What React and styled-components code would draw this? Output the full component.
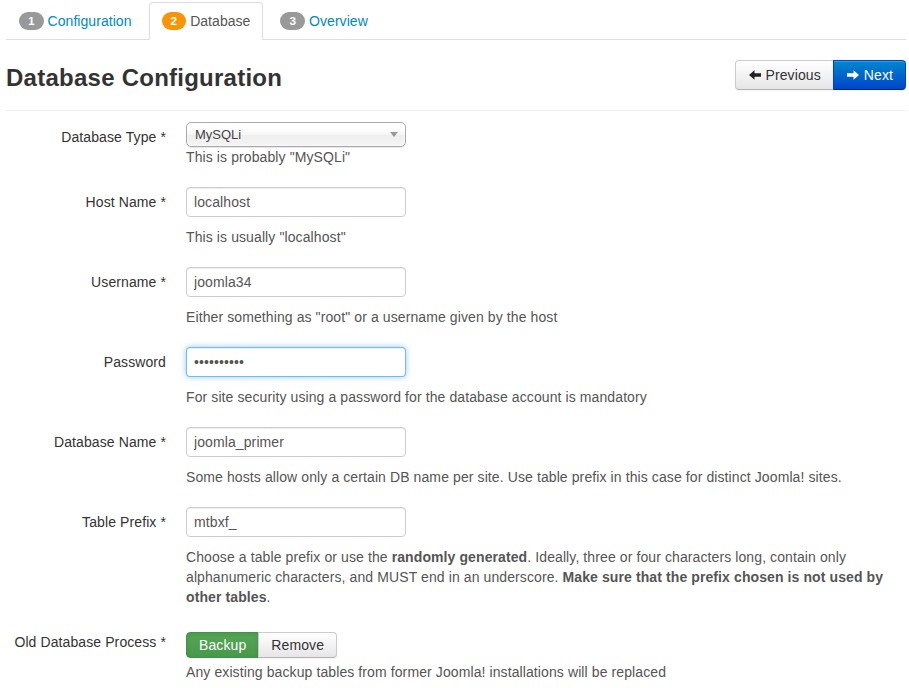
import React from "react";
import styled, { createGlobalStyle, css } from "styled-components";

const GlobalStyle = createGlobalStyle`
  html, body { margin: 0; padding: 0; background: #fff; }
  body {
    font-family: "Liberation Sans", Arial, sans-serif;
    font-size: 14px;
    line-height: 20px;
    letter-spacing: 0.1px;
    color: #333;
  }
  * { box-sizing: border-box; }
`;

const Page = styled.div`
  padding: 2px 3px 0 6px;
`;

const Tabs = styled.ul`
  display: flex;
  gap: 4px;
  list-style: none;
  margin: 0;
  padding: 0;
  border-bottom: 1px solid #ddd;
`;

const Tab = styled.li`
  margin-bottom: -1px;
  padding: 8px 12px;
  line-height: 20px;
  border: 1px solid transparent;
  border-radius: 4px 4px 0 0;
  color: #08c;
  display: flex;
  align-items: center;
  gap: 4px;
  letter-spacing: 0.05px;
  ${(p) =>
    p.$active &&
    css`
      color: #555;
      background: #fff;
      border-color: #ddd #ddd transparent;
    `}
`;

const Badge = styled.span`
  display: inline-block;
  padding: 2px 9px;
  border-radius: 9px;
  font-size: 11.844px;
  font-weight: bold;
  line-height: 14px;
  letter-spacing: 0;
  color: #fff;
  background: ${(p) => (p.$warning ? "#f89406" : "#999")};
`;

const Header = styled.div`
  display: flex;
  justify-content: space-between;
  align-items: flex-start;
  margin-top: 20px;
`;

const Title = styled.h2`
  margin: 0;
  padding-top: 5px;
  font-size: 24px;
  line-height: 25px;
  font-weight: bold;
  letter-spacing: 0.25px;
  color: #333;
`;

const ButtonGroup = styled.div`
  display: flex;
  margin-top: ${(p) => p.$mt || 0}px;
`;

const Btn = styled.button`
  font-family: inherit;
  font-size: 14px;
  line-height: 20px;
  letter-spacing: 0.1px;
  padding: ${(p) => (p.$small ? "2px 12px" : "4px 12px")};
  border: 1px solid #ccc;
  border-bottom-color: #b3b3b3;
  color: #333;
  background: linear-gradient(#ffffff, #e6e6e6);
  box-shadow: inset 0 1px 0 rgba(255, 255, 255, 0.2), 0 1px 2px rgba(0, 0, 0, 0.05);
  display: flex;
  align-items: center;
  gap: 4px;
  cursor: pointer;
  margin: 0;
  &:first-child { border-radius: 4px 0 0 4px; }
  &:last-child { border-radius: 0 4px 4px 0; margin-left: -1px; }
  ${(p) =>
    p.$variant === "primary" &&
    css`
      color: #fff;
      background: linear-gradient(#0088cc, #0044cc);
      border-color: #0044cc #0044cc #002a80;
    `}
  ${(p) =>
    p.$variant === "success" &&
    css`
      color: #fff;
      background: linear-gradient(#55a755, #48984a);
      border-color: #41924a;
      box-shadow: inset 0 2px 4px rgba(0, 0, 0, 0.1);
    `}
`;

const Divider = styled.div`
  height: 1px;
  background: #eee;
  margin: 20px 0 11px;
`;

const ControlGroup = styled.div`
  display: flex;
  margin-bottom: 20px;
`;

const Label = styled.label`
  width: 160px;
  flex-shrink: 0;
  text-align: right;
  padding-top: 5px;
  color: #333;
`;

const Controls = styled.div`
  margin-left: 20px;
  flex: 1;
  min-width: 0;
`;

const Input = styled.input`
  display: block;
  width: 220px;
  height: 30px;
  padding: 4px 7px;
  font-family: inherit;
  font-size: 14px;
  line-height: 20px;
  letter-spacing: 0.1px;
  color: #555;
  border: 1px solid #ccc;
  border-radius: 4px;
  background: #fff;
  box-shadow: inset 0 1px 1px rgba(0, 0, 0, 0.075);
  outline: none;
  ${(p) =>
    p.$focused &&
    css`
      border-color: rgba(82, 168, 236, 0.8);
      box-shadow: inset 0 1px 1px rgba(0, 0, 0, 0.075), 0 0 6px rgba(82, 168, 236, 0.6);
    `}
`;

const SelectWrap = styled.div`
  position: relative;
  width: 220px;
`;

const Select = styled.select`
  appearance: none;
  -webkit-appearance: none;
  display: block;
  width: 220px;
  height: 25px;
  padding: 0 0 0 8px;
  font-family: inherit;
  font-size: 13px;
  line-height: 23px;
  color: #444;
  border: 1px solid #aaa;
  border-radius: 5px;
  background: linear-gradient(#ffffff 20%, #f6f6f6 50%, #eeeeee 52%, #f4f4f4 100%);
  box-shadow: inset 0 0 3px #fff, 0 1px 1px rgba(0, 0, 0, 0.1);
  outline: none;
`;

const Caret = styled.span`
  position: absolute;
  right: 8px;
  top: 10px;
  width: 0;
  height: 0;
  border-left: 4px solid transparent;
  border-right: 4px solid transparent;
  border-top: 5px solid #999;
  pointer-events: none;
`;

const Help = styled.p`
  margin: ${(p) => p.$mt ?? 10}px 0 0;
  color: #555;
`;

const Arrow = ({ dir }) => (
  <svg width="14" height="14" viewBox="0 0 14 14" aria-hidden="true">
    {dir === "left" ? (
      <path d="M1 7 L6.5 2.2 V5.3 H13 V8.7 H6.5 V11.8 Z" fill="#222" />
    ) : (
      <path d="M13 7 L7.5 2.2 V5.3 H1 V8.7 H7.5 V11.8 Z" fill="#fff" />
    )}
  </svg>
);

const Row = ({ label, children, help, mt }) => (
  <ControlGroup>
    <Label>{label}</Label>
    <Controls>
      {children}
      <Help $mt={mt}>{help}</Help>
    </Controls>
  </ControlGroup>
);

export default function App() {
  return (
    <>
      <GlobalStyle />
      <Page>
        <Tabs>
          <Tab>
            <Badge>1</Badge> Configuration
          </Tab>
          <Tab $active>
            <Badge $warning>2</Badge> Database
          </Tab>
          <Tab>
            <Badge>3</Badge> Overview
          </Tab>
        </Tabs>

        <Header>
          <Title>Database Configuration</Title>
          <ButtonGroup>
            <Btn>
              <Arrow dir="left" /> Previous
            </Btn>
            <Btn $variant="primary">
              <Arrow dir="right" /> Next
            </Btn>
          </ButtonGroup>
        </Header>

        <Divider />

        <Row label="Database Type *" help={'This is probably "MySQLi"'} mt={0}>
          <SelectWrap>
            <Select defaultValue="mysqli">
              <option value="mysqli">MySQLi</option>
              <option value="mysql">MySQL</option>
            </Select>
            <Caret />
          </SelectWrap>
        </Row>

        <Row label="Host Name *" help={'This is usually "localhost"'}>
          <Input defaultValue="localhost" />
        </Row>

        <Row label="Username *" help={'Either something as "root" or a username given by the host'}>
          <Input defaultValue="joomla34" />
        </Row>

        <Row
          label="Password"
          help="For site security using a password for the database account is mandatory"
        >
          <Input type="password" defaultValue="1234567890" $focused autoFocus />
        </Row>

        <Row
          label="Database Name *"
          help="Some hosts allow only a certain DB name per site. Use table prefix in this case for distinct Joomla! sites."
        >
          <Input defaultValue="joomla_primer" />
        </Row>

        <Row
          label="Table Prefix *"
          help={
            <>
              Choose a table prefix or use the <b>randomly generated</b>. Ideally, three or four
              characters long, contain only alphanumeric characters, and MUST end in an underscore.{" "}
              <b>Make sure that the prefix chosen is not used by other tables</b>.
            </>
          }
        >
          <Input defaultValue="mtbxf_" />
        </Row>

        <ControlGroup>
          <Label>Old Database Process *</Label>
          <Controls>
            <ButtonGroup $mt={5}>
              <Btn $small $variant="success">Backup</Btn>
              <Btn $small>Remove</Btn>
            </ButtonGroup>
            <Help $mt={4}>
              Any existing backup tables from former Joomla! installations will be replaced
            </Help>
          </Controls>
        </ControlGroup>
      </Page>
    </>
  );
}
